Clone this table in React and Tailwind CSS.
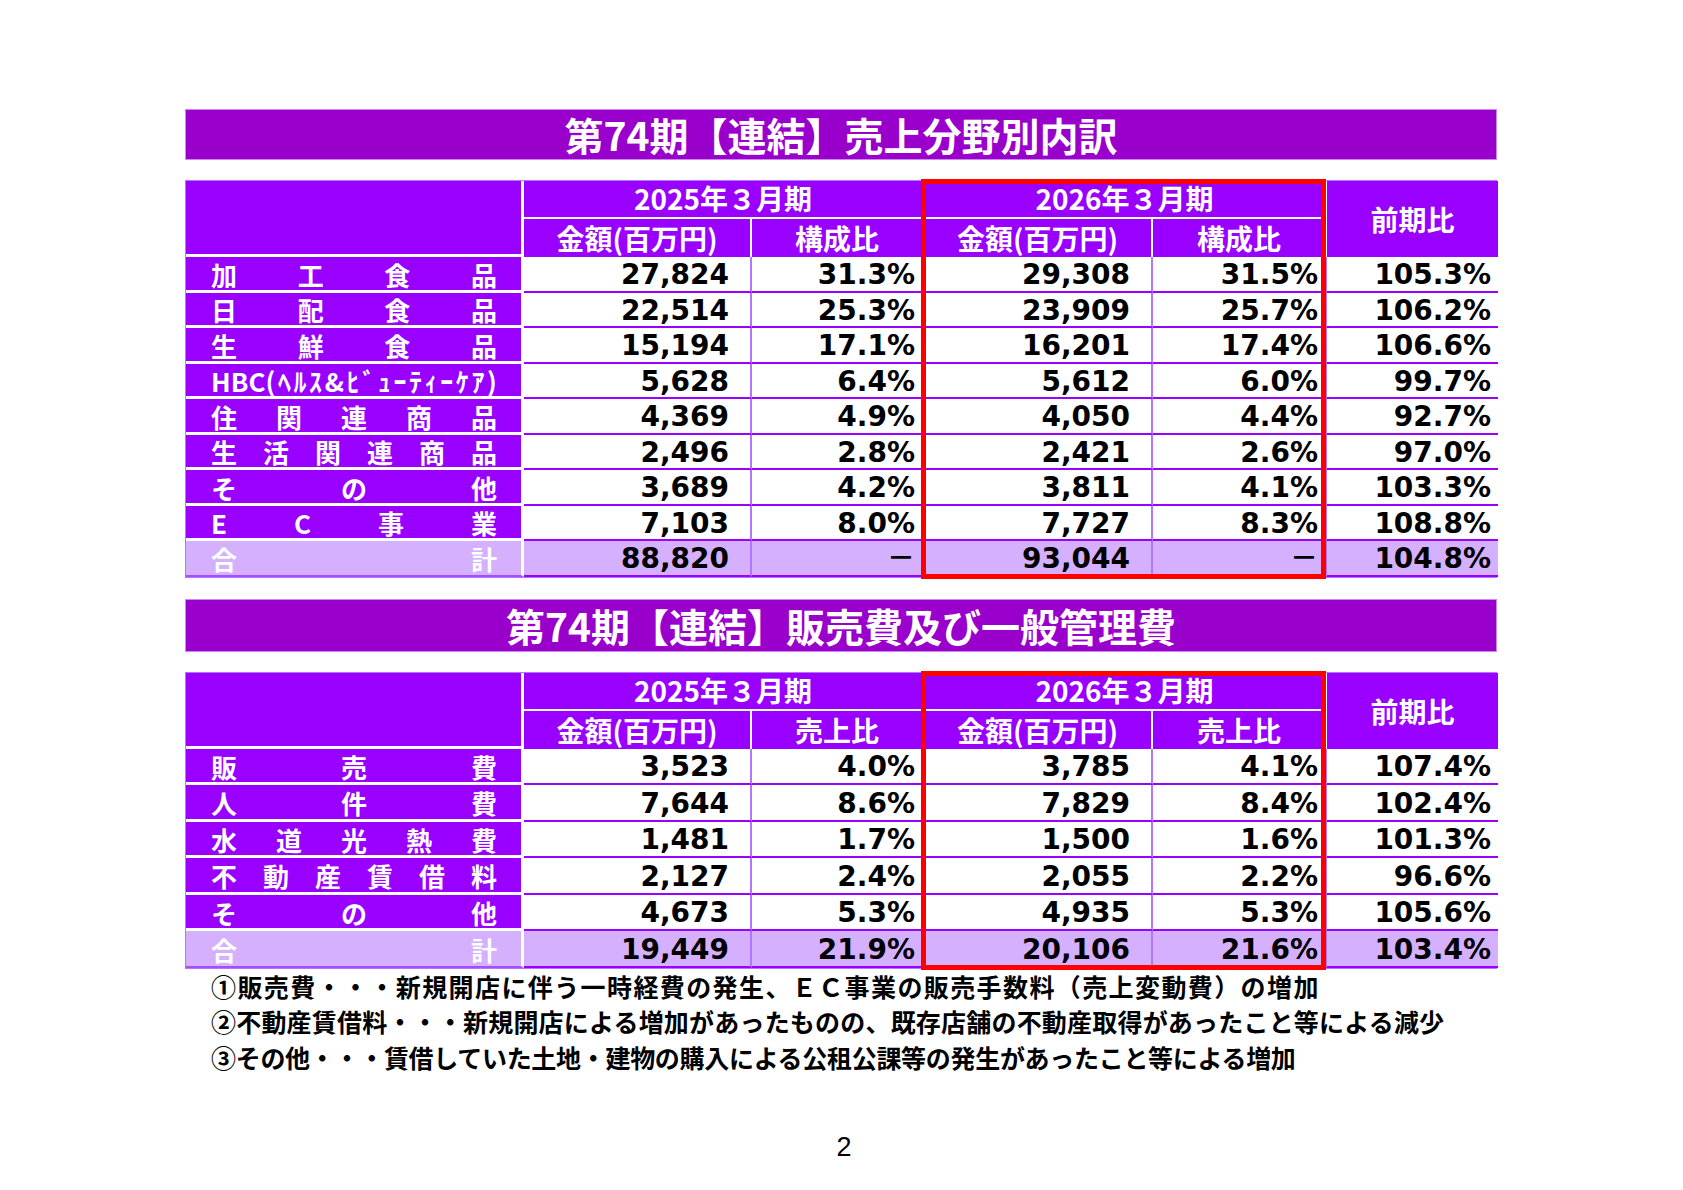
import React from "react";

const salesRows = [
    [["加", "工", "食", "品"], "27,824", "31.3%", "29,308", "31.5%", "105.3%"],
    [["日", "配", "食", "品"], "22,514", "25.3%", "23,909", "25.7%", "106.2%"],
    [["生", "鮮", "食", "品"], "15,194", "17.1%", "16,201", "17.4%", "106.6%"],
    [["HBC(", "ﾍ", "ﾙ", "ｽ", "&", "ﾋ", "ﾞ", "ｭ", "ｰ", "ﾃ", "ｨ", "ｰ", "ｹ", "ｱ", ")"], "5,628", "6.4%", "5,612", "6.0%", "99.7%"],
    [["住", "関", "連", "商", "品"], "4,369", "4.9%", "4,050", "4.4%", "92.7%"],
    [["生", "活", "関", "連", "商", "品"], "2,496", "2.8%", "2,421", "2.6%", "97.0%"],
    [["そ", "の", "他"], "3,689", "4.2%", "3,811", "4.1%", "103.3%"],
    [["E", "C", "事", "業"], "7,103", "8.0%", "7,727", "8.3%", "108.8%"],
];
const salesTotal = [["合", "計"], "88,820", "－", "93,044", "－", "104.8%"];

const costRows = [
    [["販", "売", "費"], "3,523", "4.0%", "3,785", "4.1%", "107.4%"],
    [["人", "件", "費"], "7,644", "8.6%", "7,829", "8.4%", "102.4%"],
    [["水", "道", "光", "熱", "費"], "1,481", "1.7%", "1,500", "1.6%", "101.3%"],
    [["不", "動", "産", "賃", "借", "料"], "2,127", "2.4%", "2,055", "2.2%", "96.6%"],
    [["そ", "の", "他"], "4,673", "5.3%", "4,935", "5.3%", "105.6%"],
];
const costTotal = [["合", "計"], "19,449", "21.9%", "20,106", "21.6%", "103.4%"];

const notes = [
    ["①販売費・・・新規開店に伴う一時経費の発生、ＥＣ事業の販売手数料（売上変動費）の増加", "tracking-[1.4px]"],
    ["②不動産賃借料・・・新規開店による増加があったものの、既存店舗の不動産取得があったこと等による減少", "tracking-[0.2px]"],
    ["③その他・・・賃借していた土地・建物の購入による公租公課等の発生があったこと等による増加", "tracking-[-0.3px]"],
];

function TitleBar({ text, height }) {
    return (
        <div className={`w-[1312px] ${height} bg-[#9900cc] border border-[#cc88ee] flex items-center justify-center`}>
            <span className="text-white text-[39px] font-bold leading-none font-['Noto_Sans_CJK_JP','Noto_Sans',sans-serif]">{text}</span>
        </div>
    );
}

// Excel-style distributed label (each token spread across the cell)
function Label({ parts, total }) {
    return (
        <div className={`${total ? "bg-[#d5b0ff] border-b-2 border-b-[#a64dff]" : "bg-[#9900ff] border-b-[3px] border-b-white"} border-r-[3px] border-r-white flex items-center justify-between pl-[25px] pr-[24px] pt-[3px] text-white text-[26px] font-bold leading-none font-['Noto_Sans_CJK_JP','Noto_Sans',sans-serif]`}>
            {parts.map((c, i) => <span key={i}>{c}</span>)}
        </div>
    );
}

function Cell({ value, wide, total, last }) {
    return (
        <div className={`${total ? "bg-[#d5b0ff]" : "bg-white"} border-b-2 border-b-[#9900ff] ${last ? "" : "border-r-2 border-r-[#b377ff]"} flex items-center justify-end pt-[3px] ${wide ? "pr-[21px]" : "pr-[7px]"} text-black text-[28px] font-bold leading-none font-['DejaVu_Sans','Noto_Sans_CJK_JP',sans-serif]`}>
            {value}
        </div>
    );
}

function DataTable({ rows, total, ratioLabel, rowsClass, boxHeight }) {
    const head = "bg-[#9900ff] flex items-center justify-center text-white text-[28px] font-bold leading-none font-['Noto_Sans_CJK_JP','Noto_Sans',sans-serif]";
    return (
        <div className="relative w-[1312px]">
            <div className={`grid grid-cols-[338px_228px_172px_229px_174px_171px] ${rowsClass} border border-[#b377ff]`}>
                <div className="row-span-2 bg-[#9900ff] border-r-[3px] border-b-[3px] border-white" />
                <div className={`col-span-2 ${head} border-r-2 border-b-2 border-white pb-[2px]`}>2025年３月期</div>
                <div className={`col-span-2 ${head} border-r-2 border-b-2 border-white pb-[2px]`}>2026年３月期</div>
                <div className={`row-span-2 ${head}`}>前期比</div>
                <div className={`${head} border-r-2 border-white`}>金額(百万円)</div>
                <div className={`${head} border-r-2 border-white`}>{ratioLabel}</div>
                <div className={`${head} border-r-2 border-white`}>金額(百万円)</div>
                <div className={`${head} border-r-2 border-white`}>{ratioLabel}</div>

                {[...rows, total].map((r, i) => {
                    const isTotal = i === rows.length;
                    return (
                        <React.Fragment key={i}>
                            <Label parts={r[0]} total={isTotal} />
                            <Cell value={r[1]} wide total={isTotal} />
                            <Cell value={r[2]} total={isTotal} />
                            <Cell value={r[3]} wide total={isTotal} />
                            <Cell value={r[4]} total={isTotal} />
                            <Cell value={r[5]} total={isTotal} last />
                        </React.Fragment>
                    );
                })}
            </div>

            {/* red highlight over the current period */}
            <div className={`absolute left-[736px] top-[-1px] w-[405px] ${boxHeight} border-[5px] border-[#ff0000] pointer-events-none`} />
        </div>
    );
}

export default function App() {
    return (
        <div className="w-[1683px] h-[1190px] bg-white flex flex-col pl-[185px] pt-[109px]">
            <TitleBar text="第74期【連結】売上分野別内訳" height="h-[51px]" />

            <div className="mt-[20px]">
                <DataTable rows={salesRows} total={salesTotal} ratioLabel="構成比" rowsClass="grid-rows-[38px_38px_repeat(9,35.5px)]" boxHeight="h-[400px]" />
            </div>

            <div className="mt-[21px]">
                <TitleBar text="第74期【連結】販売費及び一般管理費" height="h-[53px]" />
            </div>

            <div className="mt-[20px]">
                <DataTable rows={costRows} total={costTotal} ratioLabel="売上比" rowsClass="grid-rows-[38px_38px_repeat(6,36.5px)]" boxHeight="h-[299px]" />
            </div>

            {/* notes */}
            <div className="pl-[26px] flex flex-col text-black text-[25px] font-bold leading-[35.5px] font-['Noto_Sans_CJK_JP','Noto_Sans',sans-serif]">
                {notes.map(([n, t], i) => <div key={i} className={`whitespace-nowrap ${t}`}>{n}</div>)}
            </div>

            <div className="w-[1312px] mt-[59px] flex justify-center text-black text-[27px] leading-none font-['Liberation_Sans',Arial,sans-serif]">
                <span className="ml-[6px]">2</span>
            </div>
        </div>
    );
}
